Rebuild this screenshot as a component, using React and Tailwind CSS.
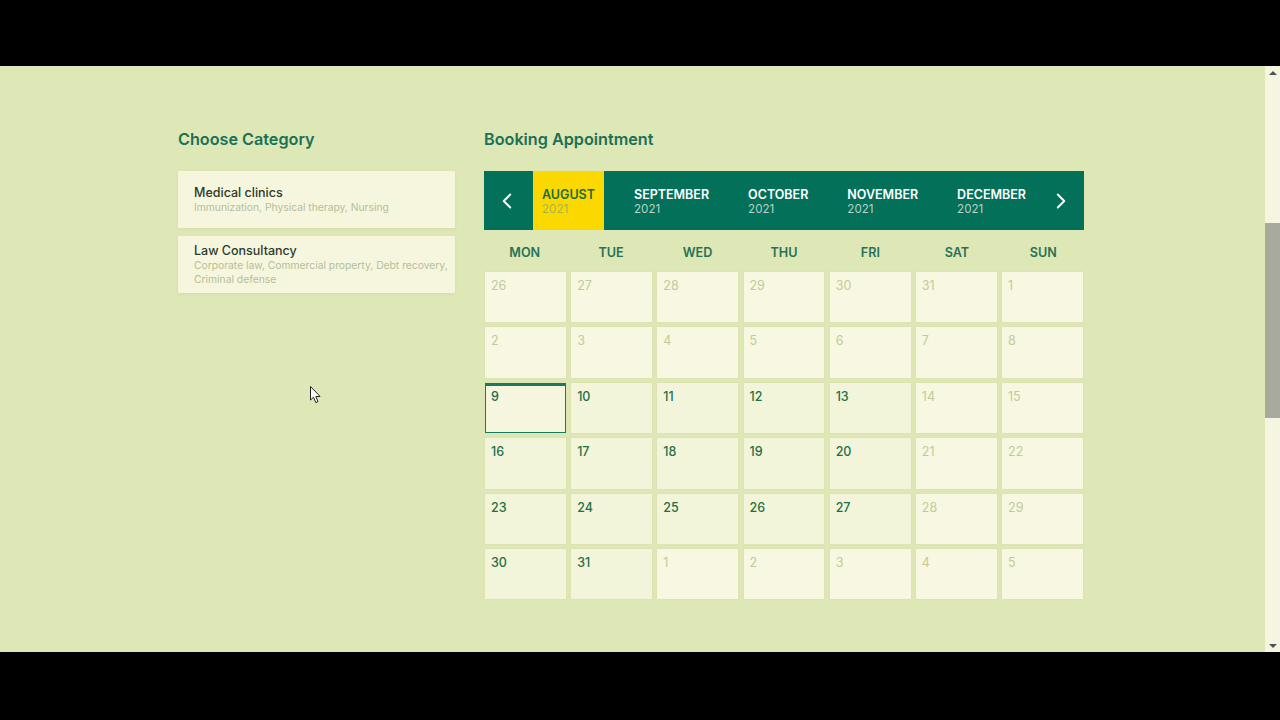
import { ChevronLeft, ChevronRight } from "lucide-react";

const categories = [
  { name: "Medical clinics", desc: "Immunization, Physical therapy, Nursing" },
  { name: "Law Consultancy", desc: "Corporate law, Commercial property, Debt recovery, Criminal defense" },
];
const months = ["SEPTEMBER", "OCTOBER", "NOVEMBER", "DECEMBER"];
const weekDays = ["MON", "TUE", "WED", "THU", "FRI", "SAT", "SUN"];
const days = [
  [26, 0], [27, 0], [28, 0], [29, 0], [30, 0], [31, 0], [1, 0],
  [2, 0], [3, 0], [4, 0], [5, 0], [6, 0], [7, 0], [8, 0],
  [9, 1], [10, 1], [11, 1], [12, 1], [13, 1], [14, 0], [15, 0],
  [16, 1], [17, 1], [18, 1], [19, 1], [20, 1], [21, 0], [22, 0],
  [23, 1], [24, 1], [25, 1], [26, 1], [27, 1], [28, 0], [29, 0],
  [30, 1], [31, 1], [1, 0], [2, 0], [3, 0], [4, 0], [5, 0],
];

export default function App() {
  return (
    <div className="relative flex flex-col h-screen bg-black font-['Inter',sans-serif] overflow-hidden">
      <div className="h-[66px] shrink-0" />
      <div className="flex flex-1 min-h-0 bg-[#dee7b6]">
        <main className="flex-1 flex gap-[29px] pl-[178px] pt-[62px]">
          {/* Category */}
          <section className="w-[277px]">
            <h2 className="text-[16.2px] leading-[22px] font-semibold text-[#1a7155]">Choose Category</h2>
            <div className="mt-[21px] flex flex-col gap-2">
              {categories.map((c) => (
                <div key={c.name} className="h-[57px] pl-4 pr-[3px] flex flex-col justify-center bg-[#f6f6df] shadow-[0_1px_3px_#d8d8a8]">
                  <div className="text-[12.5px] leading-[15px] font-medium text-[#2c3a2c]">{c.name}</div>
                  <div className="text-[10.3px] leading-[14px] text-[#b4bf98]">{c.desc}</div>
                </div>
              ))}
            </div>
          </section>

          {/* Calendar */}
          <section className="w-[600px]">
            <h2 className="text-[16.2px] leading-[22px] font-semibold text-[#1a7155]">Booking Appointment</h2>
            <div className="mt-[21px] h-[59px] flex items-stretch bg-[#03705a] text-white">
              <div className="w-[49px] pr-[4px] flex items-center justify-center">
                <ChevronLeft className="w-[26px] h-[26px]" strokeWidth={1.8} />
              </div>
              <div className="w-[71px] pl-[9px] pt-[1px] flex flex-col justify-center bg-[#fbd800]">
                <div className="text-[12.5px] leading-[15px] font-semibold text-[#1c6b45]">AUGUST</div>
                <div className="text-[11.6px] leading-[14px] text-[#a9b64a]">2021</div>
              </div>
              <div className="flex-1 flex gap-[39px] pl-[30px]">
                {months.map((m) => (
                  <div key={m} className="pt-[1px] flex flex-col justify-center">
                    <div className="text-[12.5px] leading-[15px] font-semibold">{m}</div>
                    <div className="text-[11.6px] leading-[14px] text-[#b6d3c4]">2021</div>
                  </div>
                ))}
              </div>
              <div className="w-[46px] flex items-center justify-center">
                <ChevronRight className="w-[26px] h-[26px]" strokeWidth={1.8} />
              </div>
            </div>
            <div className="mt-[15px] grid grid-cols-7 gap-[5px] text-center text-[12.6px] leading-4 font-semibold text-[#267358]">
              {weekDays.map((d) => (
                <div key={d}>{d}</div>
              ))}
            </div>
            <div className="mt-[11px] px-[1px] grid grid-cols-7 gap-x-[5.2px] gap-y-[5px] auto-rows-[50.4px]">
              {days.map(([n, active], i) => (
                <div
                  key={i}
                  className={
                    i === 14
                      ? "px-[5px] pt-[3px] bg-[#f6f6df] border border-[#1a7a60] border-t-[3px] text-[12.5px] leading-4 font-medium text-[#1f7048]"
                      : active
                      ? "px-[6px] pt-[6px] bg-[#f3f5da] shadow-[0_0_2px_#dcd8a8] text-[12.5px] leading-4 font-medium text-[#1f7048]"
                      : "px-[6px] pt-[6px] bg-[#f8f8e2] shadow-[0_0_2px_#dcd8a8] text-[12.5px] leading-4 text-[#c0cb98]"
                  }
                >
                  {n}
                </div>
              ))}
            </div>
          </section>
        </main>

        {/* Scrollbar */}
        <div className="w-[15px] shrink-0 flex flex-col items-center bg-[#f6f6e0]">
          <div className="mt-[5px] w-0 h-0 border-x-4 border-x-transparent border-b-[4px] border-b-[#505050]" />
          <div className="mt-[148px] h-[195px] w-full bg-[#a8aa9c]" />
          <div className="flex-1" />
          <div className="mb-[4px] w-0 h-0 border-x-4 border-x-transparent border-t-[4px] border-t-[#505050]" />
        </div>
      </div>
      <div className="h-[68px] shrink-0" />

      {/* mouse pointer */}
      <svg className="absolute left-[310px] top-[386px]" width="12" height="18" viewBox="0 0 12 18">
        <path d="M0.5 0.5 V14 L3.5 11.2 L5.8 16.6 L8 15.6 L5.8 10.6 L10 10.4 Z" fill="#fff" stroke="#222" strokeWidth="1" />
      </svg>
    </div>
  );
}
